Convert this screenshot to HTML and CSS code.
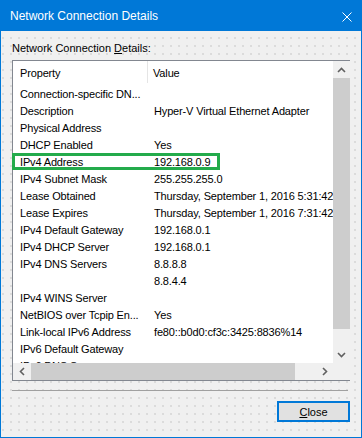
FILE: index.html
```html
<!DOCTYPE html>
<html>
<head>
<meta charset="utf-8" />
<title>Network Connection Details</title>
<link rel="stylesheet" href="styles.css">
</head>
<body>
<div class="window">
    <div class="titlebar">
        <span class="title">Network Connection Details</span>
        <svg class="close-x" width="10" height="10" viewBox="0 0 10 10"><path d="M0.5 0.5 L9.5 9.5 M9.5 0.5 L0.5 9.5" stroke="#fff" stroke-width="1" fill="none"/></svg>
    </div>
    <div class="client">
        <div class="caption">Network Connection <u>D</u>etails:</div>
        <div class="listbox">
            <div class="view">
                <div class="header"><div class="hcol prop">Property</div><div class="hcol val">Value</div></div>
                <div class="row"><span class="prop">Connection-specific DN...</span><span class="val"></span></div>
                <div class="row"><span class="prop">Description</span><span class="val">Hyper-V Virtual Ethernet Adapter</span></div>
                <div class="row"><span class="prop">Physical Address</span><span class="val"></span></div>
                <div class="row"><span class="prop">DHCP Enabled</span><span class="val">Yes</span></div>
                <div class="row"><span class="prop">IPv4 Address</span><span class="val">192.168.0.9</span></div>
                <div class="row"><span class="prop">IPv4 Subnet Mask</span><span class="val">255.255.255.0</span></div>
                <div class="row"><span class="prop">Lease Obtained</span><span class="val">Thursday, September 1, 2016 5:31:42</span></div>
                <div class="row"><span class="prop">Lease Expires</span><span class="val">Thursday, September 1, 2016 7:31:42</span></div>
                <div class="row"><span class="prop">IPv4 Default Gateway</span><span class="val">192.168.0.1</span></div>
                <div class="row"><span class="prop">IPv4 DHCP Server</span><span class="val">192.168.0.1</span></div>
                <div class="row"><span class="prop">IPv4 DNS Servers</span><span class="val">8.8.8.8</span></div>
                <div class="row"><span class="prop"></span><span class="val">8.8.4.4</span></div>
                <div class="row"><span class="prop">IPv4 WINS Server</span><span class="val"></span></div>
                <div class="row"><span class="prop">NetBIOS over Tcpip En...</span><span class="val">Yes</span></div>
                <div class="row"><span class="prop">Link-local IPv6 Address</span><span class="val">fe80::b0d0:cf3c:3425:8836%14</span></div>
                <div class="row"><span class="prop">IPv6 Default Gateway</span><span class="val"></span></div>
                <div class="row"><span class="prop">IPv6 DNS Servers</span><span class="val"></span></div>
            </div>
            <div class="vscroll">
                <div class="arrow"><svg width="9" height="6" viewBox="0 0 9 6"><path d="M1 5 L4.5 1.5 L8 5" stroke="#606060" stroke-width="1.6" fill="none"/></svg></div>
                <div class="track"><div class="thumb"></div></div>
                <div class="arrow"><svg width="9" height="6" viewBox="0 0 9 6"><path d="M1 1 L4.5 4.5 L8 1" stroke="#606060" stroke-width="1.6" fill="none"/></svg></div>
            </div>
            <div class="hscroll">
                <div class="arrow"><svg width="6" height="9" viewBox="0 0 6 9"><path d="M5 1 L1.5 4.5 L5 8" stroke="#606060" stroke-width="1.6" fill="none"/></svg></div>
                <div class="track"><div class="thumb"></div></div>
                <div class="arrow"><svg width="6" height="9" viewBox="0 0 6 9"><path d="M1 1 L4.5 4.5 L1 8" stroke="#606060" stroke-width="1.6" fill="none"/></svg></div>
            </div>
            <div class="corner"></div>
        </div>
        <div class="sep"></div>
        <div class="buttons"><button class="btn"><u>C</u>lose</button></div>
    </div>
    <div class="mark"></div>
</div>
</body>
</html>
```
FILE: styles.css
```css
body{
    margin:0;
    font-family:"Liberation Sans", Arial, sans-serif;
    font-size:11px;
    color:#000;
}
.window{
    position:relative;
    width:362px;
    height:438px;
    box-sizing:border-box;
    border:1px solid #0078d7;
    display:flex;
    flex-direction:column;
}
.titlebar{
    height:30px;
    background:#0078d7;
    color:#fff;
    display:flex;
    align-items:center;
    justify-content:space-between;
    padding:0 9px 0 9px;
    font-size:12px;
}
.close-x{margin-top:1px;}
.client{
    flex:1;
    padding:0 11px;
    background-color:#f0f0f0;
    background-image:radial-gradient(circle, #cfcfcf 0.6px, transparent 0.9px);
    background-size:8px 8px;
    background-position:-2px 3px;
}
.caption{
    padding-top:9px;
    line-height:16px;
    height:16px;
    margin-bottom:4px;
}

/* list view */
.listbox{
    display:grid;
    grid-template-columns:320px 17px;
    grid-template-rows:302px 17px;
    border:1px solid #828790;
    background:#fff;
}
.view{
    overflow:hidden;
    white-space:nowrap;
    letter-spacing:-0.15px;
}
.header{
    display:grid;
    grid-template-columns:135px auto;
    height:25px;
    line-height:24px;
}
.hcol.prop{
    padding-left:7px;
    border-right:1px solid #e5e5e5;
    height:22px;
}
.hcol.val{padding-left:5px;}
.row{
    display:grid;
    grid-template-columns:135px auto;
    height:17px;
    line-height:17px;
}
.row .prop{padding-left:7px;}
.row .val{padding-left:6px;}

/* scroll bars */
.vscroll, .hscroll, .corner{background:#f0f0f0;}
.vscroll{
    display:flex;
    flex-direction:column;
}
.vscroll .arrow{height:17px;}
.vscroll .track{flex:1;}
.vscroll .thumb{height:251px;background:#cdcdcd;}
.hscroll{display:flex;}
.hscroll .arrow{width:17px;}
.hscroll .track{flex:1;}
.hscroll .thumb{width:264px;height:100%;margin-left:1px;background:#cdcdcd;}
.arrow{
    display:flex;
    align-items:center;
    justify-content:center;
}

.sep{
    height:1px;
    background:#a0a0a0;
    margin:9px 2px 0 0;
}
.buttons{
    display:flex;
    justify-content:flex-end;
    margin-top:10px;
}
.btn{
    width:73px;
    height:21px;
    border:2px solid #0078d7;
    background:#e1e1e1;
    font:inherit;
    padding:0;
    color:#000;
}

/* highlight drawn over the list */
.mark{
    position:absolute;
    left:11px;
    top:152px;
    width:202px;
    height:11px;
    border:3px solid #23ab4b;
}
```
